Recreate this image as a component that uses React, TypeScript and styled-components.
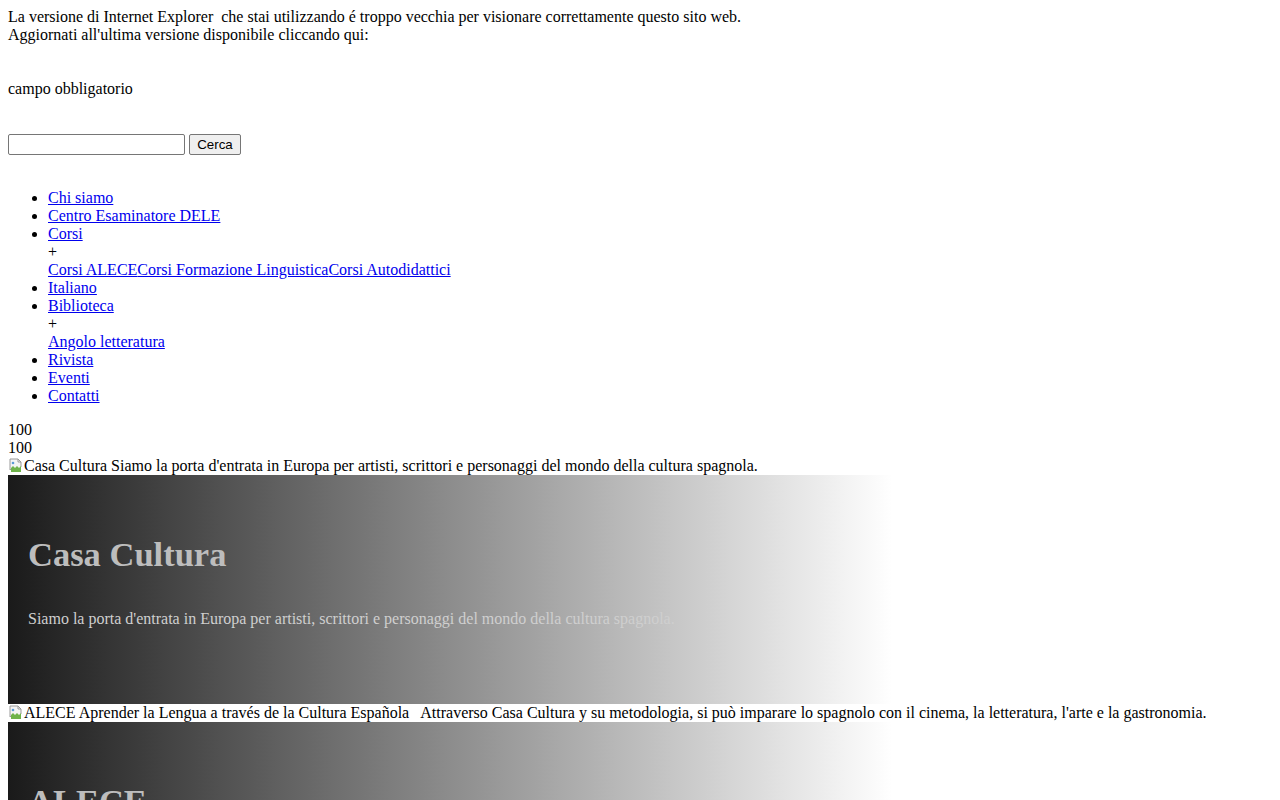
import React from 'react';
import styled, { createGlobalStyle } from 'styled-components';

const GlobalStyle = createGlobalStyle`
    html, body {
        margin: 0;
        background: #fff;
    }
    body {
        padding: 8px;
        font-family: "Liberation Serif", "Times New Roman", serif;
        font-size: 16px;
        line-height: 18px;
        color: #000;
    }
`;

const Notice = styled.div`
    margin-bottom: 36px;
`;

const Required = styled.div`
    margin-bottom: 35px;
`;

const SearchForm = styled.form`
    display: flex;
    align-items: center;
    gap: 4px;
    height: 22px;
    margin-bottom: 34px;
`;

const SearchInput = styled.input`
    box-sizing: border-box;
    width: 177px;
    height: 21px;
    padding: 1px 2px;
    border: 1px solid #767676;
    border-radius: 2px;
    font-family: "Liberation Sans", Arial, sans-serif;
    font-size: 13px;
    margin: 0;
`;

const SearchButton = styled.button`
    box-sizing: border-box;
    height: 21px;
    width: 52px;
    padding: 0 6px;
    border: 1px solid #767676;
    border-radius: 2px;
    background: #efefef;
    font-family: "Liberation Sans", Arial, sans-serif;
    font-size: 13.33px;
    color: #000;
    margin: 0;
`;

const Menu = styled.ul`
    margin: 0 0 16px;
    padding-left: 40px;
    list-style: disc;
`;

const MenuItem = styled.li``;

const Link = styled.a`
    color: #0000ee;
    text-decoration: underline;
`;

const SubToggle = styled.div``;

const SubLinks = styled.div``;

const Plain = styled.div``;

const AltLine = styled.div`
    display: flex;
    align-items: flex-end;
    white-space: pre;
`;

const BrokenIcon = styled.svg`
    width: 16px;
    height: 16px;
    flex: none;
    margin-bottom: 1px;
`;

const Slide = styled.section`
    box-sizing: border-box;
    height: 229px;
    padding: 60px 20px 0;
    background: linear-gradient(to right, #1a1a1a 0%, rgba(255, 255, 255, 0) 70%);
`;

const SlideTitle = styled.h1`
    margin: 0;
    font-size: 34.5px;
    line-height: 38px;
    font-weight: bold;
    color: #bdbdbd;
`;

const SlideText = styled.p`
    margin: 37px 0 0;
    color: #cfcfcf;
`;

const Broken = () => (
    <BrokenIcon viewBox="0 0 16 16">
        <path d="M2 1h8l3 3v5l-2 2-2-2-2 2-2-2-3 3V1z" fill="#f4f4f4" stroke="#9a9a9a" strokeWidth="1" />
        <path d="M10 1v3h3" fill="none" stroke="#9a9a9a" strokeWidth="1" />
        <path d="M3 10l2-2 2 2 2-2 2 2 2-2v6H3z" fill="#6fb34a" />
        <circle cx="5" cy="5" r="1.3" fill="#5b9bd5" />
    </BrokenIcon>
);

type SlideProps = { title: string; text: string; alt: string };

const Banner = ({ title, text, alt }: SlideProps) => (
    <>
        <AltLine>
            <Broken />
            {alt}
        </AltLine>
        <Slide>
            <SlideTitle>{title}</SlideTitle>
            <SlideText>{text}</SlideText>
        </Slide>
    </>
);

export default function App() {
    return (
        <>
            <GlobalStyle />
            <Notice>
                La versione di Internet Explorer&nbsp; che stai utilizzando é troppo vecchia per visionare correttamente questo sito web.
                <br />
                Aggiornati all'ultima versione disponibile cliccando qui:
            </Notice>
            <Required>campo obbligatorio</Required>
            <SearchForm onSubmit={(e: React.FormEvent) => e.preventDefault()}>
                <SearchInput type="text" />
                <SearchButton type="submit">Cerca</SearchButton>
            </SearchForm>
            <Menu>
                <MenuItem><Link href="#">Chi siamo</Link></MenuItem>
                <MenuItem><Link href="#">Centro Esaminatore DELE</Link></MenuItem>
                <MenuItem>
                    <Link href="#">Corsi</Link>
                    <SubToggle>+</SubToggle>
                    <SubLinks>
                        <Link href="#">Corsi ALECE</Link><Link href="#">Corsi Formazione Linguistica</Link><Link href="#">Corsi Autodidattici</Link>
                    </SubLinks>
                </MenuItem>
                <MenuItem><Link href="#">Italiano</Link></MenuItem>
                <MenuItem>
                    <Link href="#">Biblioteca</Link>
                    <SubToggle>+</SubToggle>
                    <SubLinks>
                        <Link href="#">Angolo letteratura</Link>
                    </SubLinks>
                </MenuItem>
                <MenuItem><Link href="#">Rivista</Link></MenuItem>
                <MenuItem><Link href="#">Eventi</Link></MenuItem>
                <MenuItem><Link href="#">Contatti</Link></MenuItem>
            </Menu>
            <Plain>100</Plain>
            <Plain>100</Plain>
            <Banner
                alt="Casa Cultura Siamo la porta d'entrata in Europa per artisti, scrittori e personaggi del mondo della cultura spagnola."
                title="Casa Cultura"
                text="Siamo la porta d'entrata in Europa per artisti, scrittori e personaggi del mondo della cultura spagnola."
            />
            <Banner
                alt="ALECE Aprender la Lengua a través de la Cultura Española   Attraverso Casa Cultura y su metodologia, si può imparare lo spagnolo con il cinema, la letteratura, l'arte e la gastronomia."
                title="ALECE"
                text="Attraverso Casa Cultura y su metodologia, si può imparare lo spagnolo con il cinema, la letteratura, l'arte e la gastronomia."
            />
        </>
    );
}
